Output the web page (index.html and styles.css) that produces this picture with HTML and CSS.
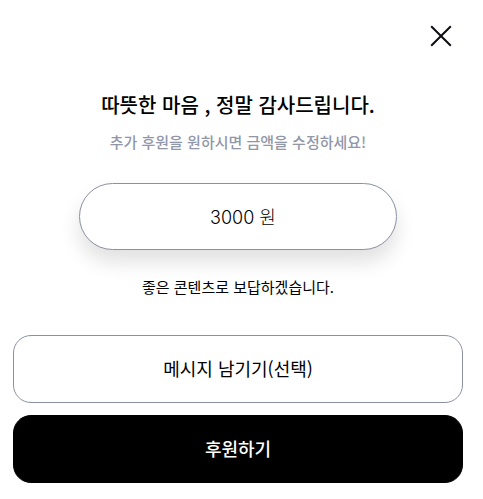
FILE: index.html
```html
<!DOCTYPE html>
<html lang="ko">

<head>
    <meta charset="UTF-8">
    <meta name="viewport" content="width=device-width, initial-scale=1.0">
    <title>후원하기</title>
    <link rel="stylesheet" href="styles.css">
</head>

<body>
    <form class="donate">
        <button class="close-button" type="button" aria-label="닫기">
            <svg width="22" height="22" viewBox="0 0 22 22" fill="none" stroke="#0b0d12" stroke-width="2">
                <path d="M1.2 1.2 20.8 20.8M20.8 1.2 1.2 20.8" />
            </svg>
        </button>
        <h1>따뜻한 마음 , 정말 감사드립니다.</h1>
        <label class="guide" for="amount">추가 후원을 원하시면 금액을 수정하세요!</label>
        <input class="amount" id="amount" type="text" value="3000 원">
        <p class="reply">좋은 콘텐츠로 보답하겠습니다.</p>
        <div class="actions">
            <button class="message-button" type="button">메시지 남기기(선택)</button>
            <button class="submit-button" type="button">후원하기</button>
        </div>
    </form>
</body>

</html>
```
FILE: styles.css
```css
* {
    box-sizing: border-box;
}

body {
    margin: 0;
    font-family: "Noto Sans CJK KR", sans-serif;
    background: #fff;
    color: #000;
}

button,
input {
    font-family: inherit;
    color: inherit;
}

.donate {
    display: flex;
    flex-direction: column;
    align-items: center;
    padding: 25px 20px 16px 13px;
    text-align: center;
}

.close-button {
    align-self: flex-end;
    display: flex;
    margin: 0 11px 0 0;
    padding: 0;
    border: none;
    background: none;
    cursor: pointer;
}

h1 {
    margin: 43px 0 0;
    font-size: 20px;
    font-weight: 500;
    line-height: 30px;
}

.guide {
    margin-top: 10px;
    color: #9297a8;
    font-size: 15px;
    font-weight: 500;
    line-height: 24px;
}

.amount {
    width: 318px;
    max-width: 100%;
    height: 67px;
    margin-top: 29px;
    padding: 0 10px 2px 20px;
    border: 1px solid #8c90a2;
    border-radius: 34px;
    background: #fff;
    box-shadow: 0 12px 20px rgba(0, 0, 0, 0.12);
    font-family: Inter, "Noto Sans CJK KR", sans-serif;
    font-size: 18px;
    font-weight: 300;
    text-align: center;
}

.reply {
    margin: 25px 0 0;
    font-size: 15px;
    line-height: 24px;
}

.actions {
    display: flex;
    flex-direction: column;
    gap: 12px;
    width: 100%;
    margin-top: 36px;
}

.message-button,
.submit-button {
    height: 68px;
    padding: 0 0 2px;
    border: 1px solid #8c90a2;
    border-radius: 18px;
    background: #fff;
    font-size: 18px;
    cursor: pointer;
}

.submit-button {
    border-color: #000;
    background: #000;
    color: #fff;
    font-weight: 500;
}
```
